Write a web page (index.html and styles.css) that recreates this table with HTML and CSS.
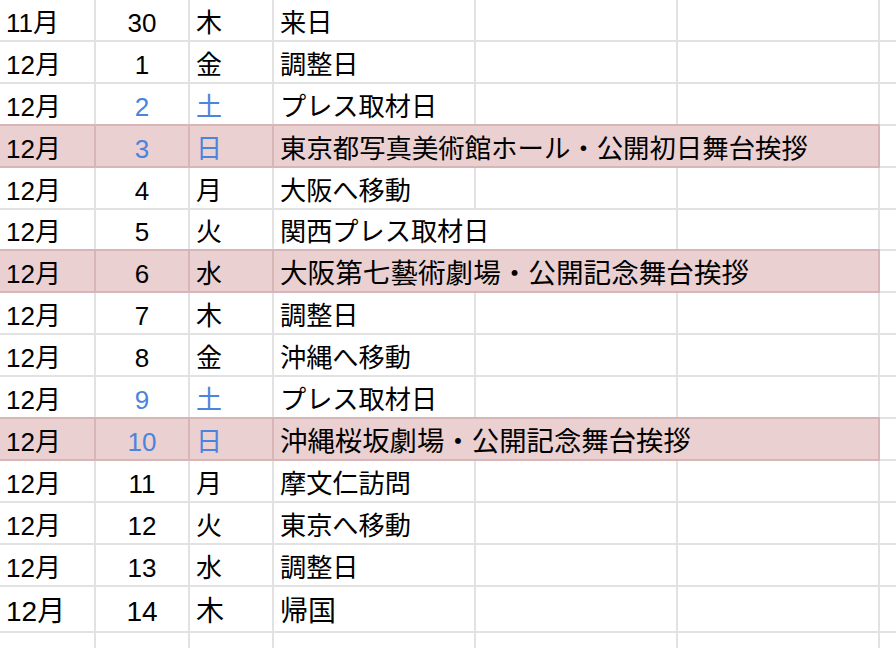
FILE: index.html
```html
<!DOCTYPE html>
<html lang="ja">
<head>
<meta charset="utf-8">
<title>スケジュール</title>
<link rel="stylesheet" href="styles.css">
</head>
<body>
<div class="sheet">
  <div class="row"><div class="c m">11月</div><div class="c d">30</div><div class="c w">木</div><div class="c t">来日</div><div class="c"></div><div class="c"></div><div class="c e"></div></div>
  <div class="row"><div class="c m">12月</div><div class="c d">1</div><div class="c w">金</div><div class="c t">調整日</div><div class="c"></div><div class="c"></div><div class="c e"></div></div>
  <div class="row"><div class="c m">12月</div><div class="c d blue">2</div><div class="c w blue">土</div><div class="c t">プレス取材日</div><div class="c"></div><div class="c"></div><div class="c e"></div></div>
  <div class="row hl"><div class="c m">12月</div><div class="c d blue">3</div><div class="c w blue">日</div><div class="c t span3 s1">東京都写真美術館ホール・公開初日舞台挨拶</div><div class="c e"></div></div>
  <div class="row"><div class="c m">12月</div><div class="c d">4</div><div class="c w">月</div><div class="c t">大阪へ移動</div><div class="c"></div><div class="c"></div><div class="c e"></div></div>
  <div class="row"><div class="c m">12月</div><div class="c d">5</div><div class="c w">火</div><div class="c t span2">関西プレス取材日</div><div class="c"></div><div class="c e"></div></div>
  <div class="row hl"><div class="c m">12月</div><div class="c d">6</div><div class="c w">水</div><div class="c t span3 s2">大阪第七藝術劇場・公開記念舞台挨拶</div><div class="c e"></div></div>
  <div class="row"><div class="c m">12月</div><div class="c d">7</div><div class="c w">木</div><div class="c t">調整日</div><div class="c"></div><div class="c"></div><div class="c e"></div></div>
  <div class="row"><div class="c m">12月</div><div class="c d">8</div><div class="c w">金</div><div class="c t">沖縄へ移動</div><div class="c"></div><div class="c"></div><div class="c e"></div></div>
  <div class="row"><div class="c m">12月</div><div class="c d blue">9</div><div class="c w blue">土</div><div class="c t">プレス取材日</div><div class="c"></div><div class="c"></div><div class="c e"></div></div>
  <div class="row hl"><div class="c m">12月</div><div class="c d blue">10</div><div class="c w blue">日</div><div class="c t span3 s3">沖縄桜坂劇場・公開記念舞台挨拶</div><div class="c e"></div></div>
  <div class="row"><div class="c m">12月</div><div class="c d">11</div><div class="c w">月</div><div class="c t">摩文仁訪問</div><div class="c"></div><div class="c"></div><div class="c e"></div></div>
  <div class="row"><div class="c m">12月</div><div class="c d">12</div><div class="c w">火</div><div class="c t">東京へ移動</div><div class="c"></div><div class="c"></div><div class="c e"></div></div>
  <div class="row"><div class="c m">12月</div><div class="c d">13</div><div class="c w">水</div><div class="c t">調整日</div><div class="c"></div><div class="c"></div><div class="c e"></div></div>
  <div class="row big"><div class="c m">12月</div><div class="c d">14</div><div class="c w">木</div><div class="c t">帰国</div><div class="c"></div><div class="c"></div><div class="c e"></div></div>
  <div class="row"><div class="c m"></div><div class="c d"></div><div class="c w"></div><div class="c t"></div><div class="c"></div><div class="c"></div><div class="c e"></div></div>
</div>
</body>
</html>
```
FILE: styles.css
```css
html, body {
  margin: 0;
  padding: 0;
  background: #ffffff;
}
body {
  width: 896px;
  height: 648px;
  overflow: hidden;
  font-family: "Liberation Sans", "Noto Sans CJK JP", sans-serif;
  color: #000000;
}
.sheet {
  padding-top: 0.1px;
}
.row {
  display: grid;
  grid-template-columns: 96px 94px 84px 202px 202px 202px 1fr;
  height: 41.9px;
  font-size: 26px;
  line-height: 26px;
}
.c {
  box-sizing: border-box;
  border-right: 2px solid #e2e2e2;
  border-bottom: 2px solid #e2e2e2;
  display: flex;
  align-items: flex-end;
  padding: 0 0 4px 6px;
  white-space: nowrap;
  overflow: visible;
}
.c.t {
  font-size: 26.2px;
}
.c.t.s1 { font-size: 26.4px; }
.c.t.s2 { font-size: 27.6px; }
.c.t.s3 { font-size: 27.4px; }
.c.d {
  justify-content: center;
  padding-left: 0;
}
.c.e {
  border-right: none;
}
.span2 { grid-column: span 2; }
.span3 { grid-column: span 3; }
.blue { color: #4a84dd; }

.row.big {
  height: 46.3px;
  font-size: 28px;
  line-height: 28px;
}
.row.big .c,
.row.big .c.t {
  font-size: 28px;
  padding-bottom: 5px;
}

.row.hl .c:not(.e) {
  background: #ead0d0;
  border-right-color: #d8b6b6;
  border-bottom-color: #d8b6b6;
  box-shadow: 0 -2px 0 #d8b6b6;
}
```
